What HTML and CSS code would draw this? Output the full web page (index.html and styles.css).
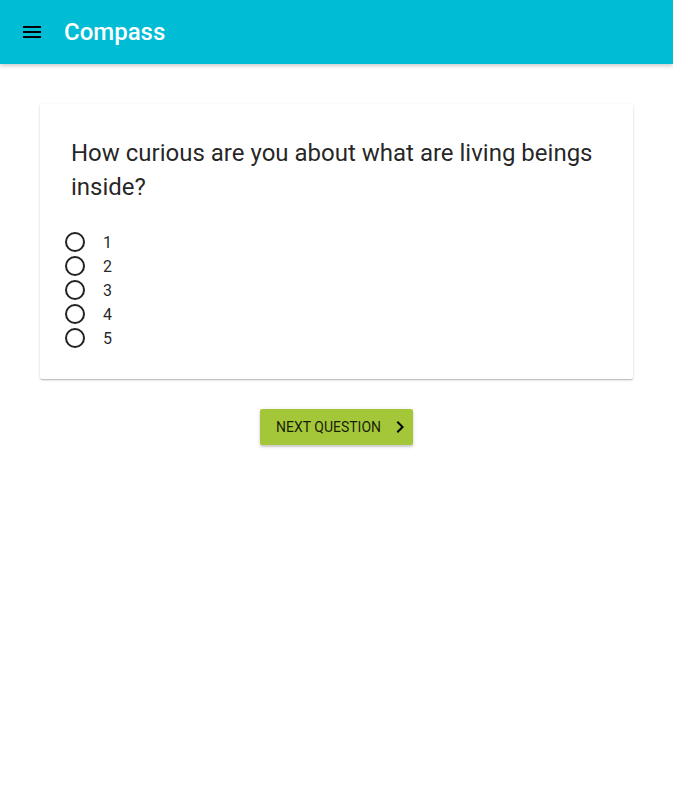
FILE: index.html
```html
<!DOCTYPE html>
<html>
<head>
<meta charset="utf-8">
<link rel="stylesheet" href="styles.css">
</head>
<body>
<header class="toolbar">
  <svg class="menu-icon" width="24" height="24" viewBox="0 0 24 24"><path d="M3 18h18v-2H3v2zm0-5h18v-2H3v2zm0-7v2h18V6H3z" fill="#000"/></svg>
  <span class="title">Compass</span>
</header>
<main class="content">
  <section class="card">
    <h2 class="question">How curious are you about what are living beings inside?</h2>
    <div class="options">
      <label class="option"><span class="radio"></span><span class="label">1</span></label>
      <label class="option"><span class="radio"></span><span class="label">2</span></label>
      <label class="option"><span class="radio"></span><span class="label">3</span></label>
      <label class="option"><span class="radio"></span><span class="label">4</span></label>
      <label class="option"><span class="radio"></span><span class="label">5</span></label>
    </div>
  </section>
  <div class="actions">
    <button class="next-btn"><span>NEXT QUESTION</span><svg width="24" height="24" viewBox="0 0 24 24"><path d="M10 6L8.59 7.41 13.17 12l-4.58 4.59L10 18l6-6z" fill="#000"/></svg></button>
  </div>
</main>
</body>
</html>
```
FILE: styles.css
```css
* { box-sizing: border-box; }
html, body { margin: 0; padding: 0; background: #fff; }
body { font-family: Roboto, "Noto Sans", sans-serif; color: rgba(0,0,0,0.87); }
.toolbar {
  height: 64px;
  background: #00bcd4;
  display: flex;
  align-items: center;
  padding: 0 20px;
  box-shadow: 0 2px 4px rgba(0,0,0,0.2);
  position: relative;
}
.menu-icon { display: block; margin-right: 20px; }
.title { color: #fff; font-size: 24px; font-weight: 500; }
.content { padding: 40px; }
.card {
  background: #fff;
  border-radius: 2px;
  box-shadow: 0 1px 3px rgba(0,0,0,0.16), 0 1px 1px rgba(0,0,0,0.1), 0 2px 1px -1px rgba(0,0,0,0.08);
  padding: 32px 24px 29px 24px;
}
.question {
  margin: 0 0 0 7px;
  font-size: 24px;
  font-weight: 400;
  line-height: 34px;
  color: rgba(0,0,0,0.87);
}
.options { margin-top: 26px; display: flex; flex-direction: column; }
.option { display: flex; align-items: center; height: 24px; font-size: 16px; }
.radio {
  width: 20px; height: 20px;
  border: 2px solid rgba(0,0,0,0.87);
  border-radius: 50%;
  margin-left: 1px;
  margin-right: 18px;
}
.label { font-size: 16px; }
.actions { display: flex; justify-content: center; margin-top: 30px; }
.next-btn {
  display: flex; align-items: center;
  background: #a4c639;
  border: none;
  border-radius: 2px;
  height: 36px;
  padding: 0 1px 0 16px;
  font-family: Roboto, sans-serif;
  font-size: 14px;
  color: rgba(0,0,0,0.87);
  box-shadow: 0 2px 2px rgba(0,0,0,0.14), 0 1px 5px rgba(0,0,0,0.12);
}
.next-btn span { margin-right: 7px; }
.next-btn svg { display: block; }
```
